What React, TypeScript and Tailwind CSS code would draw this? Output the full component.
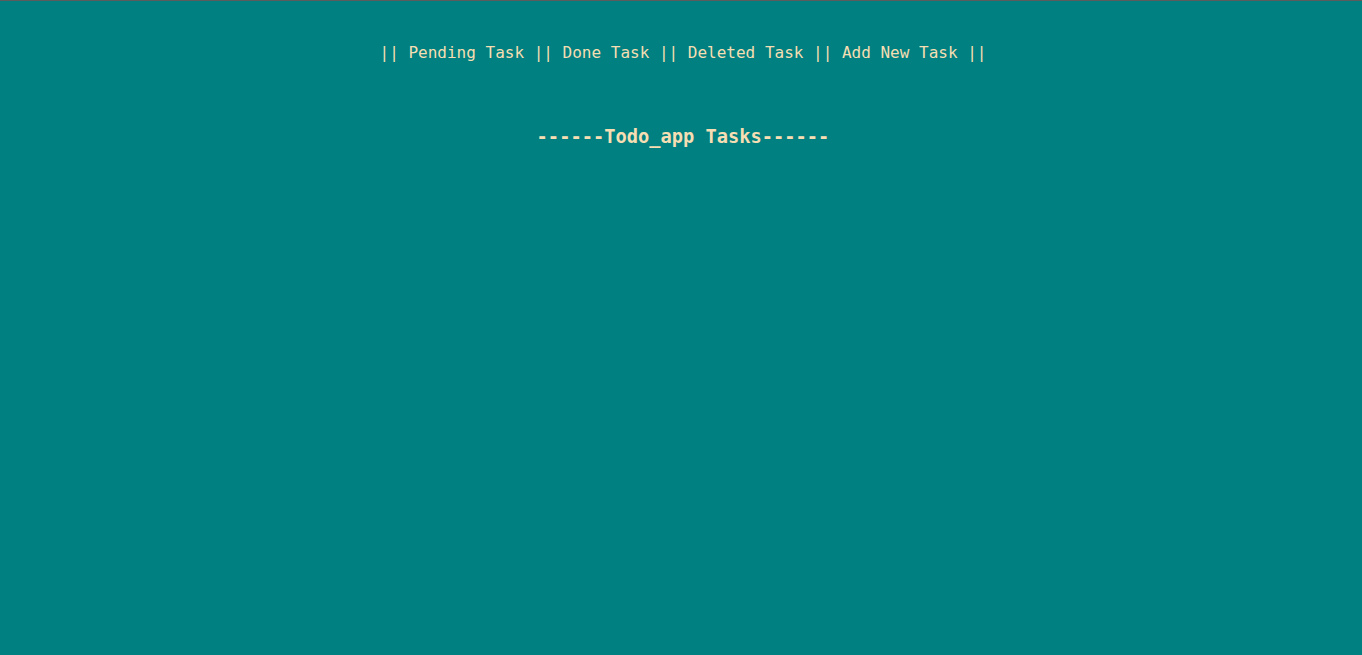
export default function App() {
  const links = ["Pending Task", "Done Task", "Deleted Task", "Add New Task"];

  return (
    <div
      className="min-h-[655px] border-t border-[#5c5c5c] bg-[#008080] pl-[4px] text-[#f5deb3]"
      style={{ fontFamily: '"DejaVu Sans Mono", monospace' }}
    >
      {/* nav */}
      <nav className="flex justify-center pt-[40px] text-[16px] leading-[24px] whitespace-pre">
        <span>|| </span>
        {links.map((l, i) => (
          <span key={l}>
            <a className="cursor-pointer">{l}</a>
            <span>{i < links.length - 1 ? " || " : " ||"}</span>
          </span>
        ))}
      </nav>

      <h3 className="mt-[60px] text-center text-[18.72px] font-bold leading-[24px]">
        ------Todo_app Tasks------
      </h3>
    </div>
  );
}
